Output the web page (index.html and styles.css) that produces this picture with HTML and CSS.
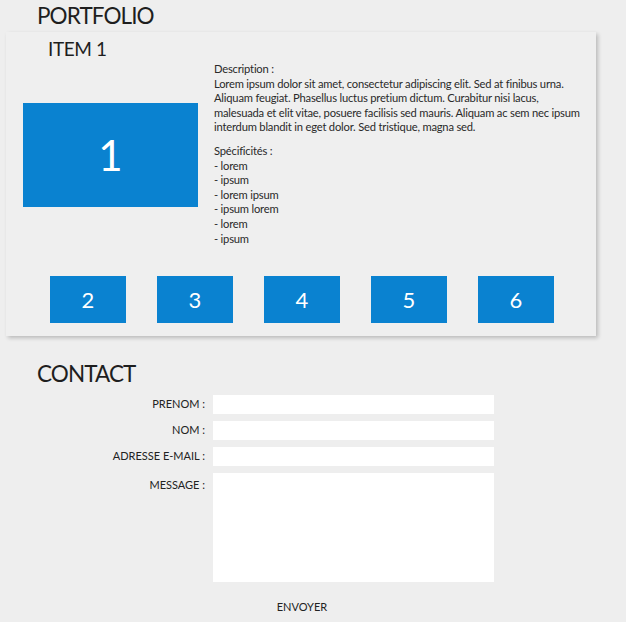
FILE: index.html
```html
<!DOCTYPE html>
<html lang="fr">
<head>
<meta charset="utf-8">
<title>Portfolio</title>
<link rel="stylesheet" href="styles.css">
</head>
<body>
<main class="page">
  <section class="portfolio">
    <h1 class="section-title">PORTFOLIO</h1>
    <div class="card">
      <h2 class="item-title">ITEM 1</h2>
      <div class="item-body">
        <div class="item-main">1</div>
        <div class="item-desc">
          <p>Description :<br>Lorem ipsum dolor sit amet, consectetur adipiscing elit. Sed at finibus urna. Aliquam feugiat. Phasellus luctus pretium dictum. Curabitur nisi lacus, malesuada et elit vitae, posuere facilisis sed mauris. Aliquam ac sem nec ipsum interdum blandit in eget dolor. Sed tristique, magna sed.</p>
          <p>Spécificités :<br>- lorem<br>- ipsum<br>- lorem ipsum<br>- ipsum lorem<br>- lorem<br>- ipsum</p>
        </div>
      </div>
      <div class="thumbs">
        <div class="thumb">2</div>
        <div class="thumb">3</div>
        <div class="thumb">4</div>
        <div class="thumb">5</div>
        <div class="thumb">6</div>
      </div>
    </div>
  </section>
  <section class="contact">
    <h1 class="section-title">CONTACT</h1>
    <form class="contact-form">
      <div class="row"><label class="label" for="prenom">PRENOM :</label><input class="field" id="prenom" type="text"></div>
      <div class="row"><label class="label" for="nom">NOM :</label><input class="field" id="nom" type="text"></div>
      <div class="row"><label class="label" for="email">ADRESSE E-MAIL :</label><input class="field" id="email" type="email"></div>
      <div class="row"><label class="label label-top" for="message">MESSAGE :</label><textarea class="field area" id="message"></textarea></div>
      <div class="actions"><button class="send" type="button">ENVOYER</button></div>
    </form>
  </section>
</main>
</body>
</html>
```

FILE: styles.css
```css
html, body {
  margin: 0;
  padding: 0;
  background: #eeeeee;
}
body {
  font-family: "Segoe UI", Lato, "Open Sans", sans-serif;
  color: #222;
  font-size: 11px;
}
.page {
  padding: 0 0 0 6px;
}
.section-title {
  margin: 0;
  padding-left: 31px;
  font-size: 22.5px;
  letter-spacing: -0.9px;
  font-weight: 400;
  line-height: 32px;
  color: #1e1e1e;
}
.card {
  width: 590px;
  box-sizing: border-box;
  background: #efefef;
  box-shadow: 2px 2px 4px rgba(0, 0, 0, 0.22);
  padding: 4px 6px 13px 17px;
  margin-top: 0;
}
.item-title {
  margin: 0;
  padding-left: 25px;
  font-size: 19px;
  letter-spacing: -0.4px;
  font-weight: 400;
  line-height: 26px;
  color: #1e1e1e;
}
.item-body {
  display: flex;
  align-items: center;
  gap: 16px;
}
.item-main {
  flex: 0 0 175px;
  height: 104px;
  margin-top: 1px;
  background: #0a82d0;
  color: #fff;
  font-size: 42px;
  display: flex;
  align-items: center;
  justify-content: center;
}
.item-desc {
  flex: 1 1 auto;
  font-size: 11.2px;
  line-height: 14.6px;
  letter-spacing: -0.2px;
  color: #2a2a2a;
}
.item-desc p {
  margin: 0 0 9px 0;
}
.item-desc p:last-child {
  margin-bottom: 0;
}
.thumbs {
  display: flex;
  justify-content: center;
  gap: 31px;
  margin-top: 30px;
  padding-right: 9px;
}
.thumb {
  width: 76px;
  height: 47px;
  background: #0a82d0;
  color: #fff;
  font-size: 22px;
  display: flex;
  align-items: center;
  justify-content: center;
}
.contact {
  margin-top: 22px;
}
.contact-form {
  display: flex;
  flex-direction: column;
  gap: 7px;
  margin-top: 5px;
}
.row {
  display: flex;
  align-items: flex-start;
  gap: 8px;
}
.label {
  width: 199px;
  text-align: right;
  line-height: 14.6px;
  padding-top: 2px;
  color: #222;
}
.label-top {
  padding-top: 5px;
}
.field {
  width: 281px;
  height: 19px;
  box-sizing: border-box;
  border: 0;
  background: #fff;
  margin: 0;
  padding: 0 4px;
  font: inherit;
}
.area {
  height: 109px;
  resize: none;
}
.actions {
  margin-top: 7px;
  width: 592px;
  display: flex;
  justify-content: center;
}
.send {
  border: 0;
  background: transparent;
  font: inherit;
  color: #222;
  padding: 4px 8px;
  cursor: pointer;
}
```
